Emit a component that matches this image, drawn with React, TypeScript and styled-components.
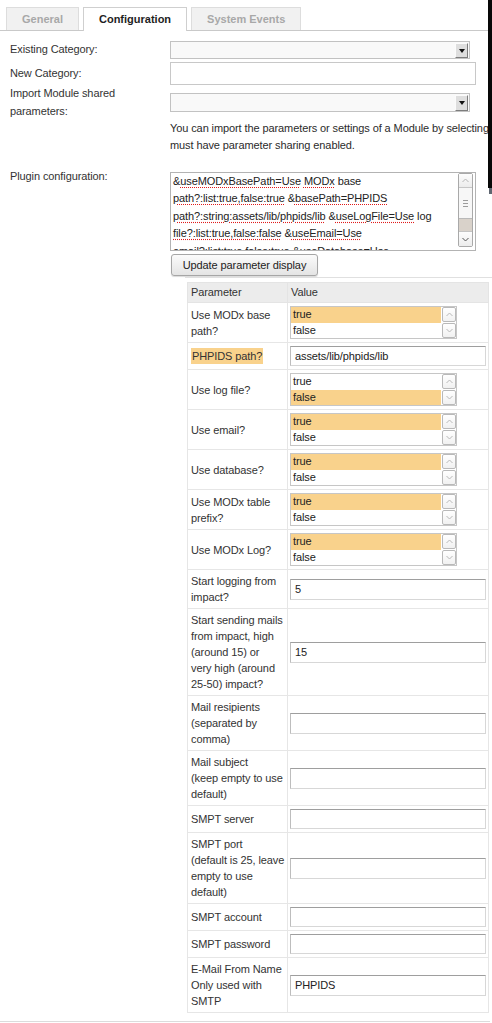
import React from "react";
import styled, { createGlobalStyle } from "styled-components";

interface Param {
  label: string[];
  kind: "list" | "text";
  value?: string;
  selected?: "true" | "false";
  marked?: boolean;
}

const params: Param[] = [
  { label: ["Use MODx base", "path?"], kind: "list", selected: "true" },
  { label: ["PHPIDS path?"], kind: "text", value: "assets/lib/phpids/lib", marked: true },
  { label: ["Use log file?"], kind: "list", selected: "false" },
  { label: ["Use email?"], kind: "list", selected: "true" },
  { label: ["Use database?"], kind: "list", selected: "true" },
  { label: ["Use MODx table", "prefix?"], kind: "list", selected: "true" },
  { label: ["Use MODx Log?"], kind: "list", selected: "true" },
  { label: ["Start logging from", "impact?"], kind: "text", value: "5" },
  {
    label: ["Start sending mails", "from impact, high", "(around 15) or", "very high (around", "25-50) impact?"],
    kind: "text",
    value: "15",
  },
  { label: ["Mail resipients", "(separated by", "comma)"], kind: "text" },
  { label: ["Mail subject", "(keep empty to use", "default)"], kind: "text" },
  { label: ["SMPT server"], kind: "text" },
  { label: ["SMPT port", "(default is 25, leave", "empty to use", "default)"], kind: "text" },
  { label: ["SMPT account"], kind: "text" },
  { label: ["SMPT password"], kind: "text" },
  { label: ["E-Mail From Name", "Only used with", "SMTP"], kind: "text", value: "PHPIDS" },
];

const Chevron: React.FC<{ up?: boolean; color: string }> = ({ up, color }) => (
  <svg width="7" height="5" viewBox="0 0 7 5">
    <polyline
      points={up ? "0.5,4 3.5,1 6.5,4" : "0.5,1 3.5,4 6.5,1"}
      fill="none"
      stroke={color}
      strokeWidth="1"
    />
  </svg>
);

const ListSelect: React.FC<{ selected: "true" | "false" }> = ({ selected }) => (
  <ListBox>
    <Options>
      <Option $selected={selected === "true"}>true</Option>
      <Option $selected={selected === "false"}>false</Option>
    </Options>
    <ListScroll>
      <ListBtn>
        <Chevron up color="#b8b8b8" />
      </ListBtn>
      <ListBtn>
        <Chevron color="#b8b8b8" />
      </ListBtn>
    </ListScroll>
  </ListBox>
);

const App: React.FC = () => {
  return (
    <Page>
      <GlobalStyle />
      <TabBar>
        <Tab>General</Tab>
        <Tab $active>Configuration</Tab>
        <Tab>System Events</Tab>
      </TabBar>

      <Form>
        <FormRow $mt={0}>
          <Label>Existing Category:</Label>
          <Select>
            <SelectArrow />
          </Select>
        </FormRow>
        <FormRow $mt={3}>
          <Label>New Category:</Label>
          <TextInput />
        </FormRow>
        <FormRow $mt={0}>
          <Label>
            Import Module shared
            <br />
            parameters:
          </Label>
          <Select $tall>
            <SelectArrow />
          </Select>
        </FormRow>
        <FormRow $mt={0}>
          <span />
          <Help>
            You can import the parameters or settings of a Module by selecting the module name from the above
            drop menu. NOTE: In order to import parameters from a module, the module
            <br />
            must have parameter sharing enabled.
          </Help>
        </FormRow>

        <FormRow $mt={14} $top>
          <Label>Plugin configuration:</Label>
          <div>
            <ConfigBox>
              <ConfigText>
                <div>
                  &amp;<Spell>useMODxBasePath=Use</Spell> <Spell>MODx</Spell> base
                </div>
                <div>
                  <Spell>path?:list:true,false:true</Spell> &amp;<Spell>basePath=PHPIDS</Spell>
                </div>
                <div>
                  <Spell>path?:string:assets/lib/phpids/lib</Spell> &amp;<Spell>useLogFile=Use</Spell> log
                </div>
                <div>
                  <Spell>file?:list:true,false:false</Spell> &amp;<Spell>useEmail=Use</Spell>
                </div>
                <div>
                  <Spell>email?:list:true,false:true</Spell> &amp;<Spell>useDatabase=Use</Spell>
                </div>
              </ConfigText>
              <ConfigScroll>
                <ScrollEnd $h={13}>
                  <Chevron up color="#b4b4b4" />
                </ScrollEnd>
                <Thumb>
                  <Grip />
                  <Grip />
                  <Grip />
                </Thumb>
                <Track />
                <ScrollEnd $h={14}>
                  <Chevron color="#555" />
                </ScrollEnd>
              </ConfigScroll>
            </ConfigBox>
            <Button>Update parameter display</Button>
            <TableWrap>
              <ParamTable>
                <colgroup>
                  <col style={{ width: 100 }} />
                  <col style={{ width: 201 }} />
                </colgroup>
                <thead>
                  <tr>
                    <Th>Parameter</Th>
                    <Th>Value</Th>
                  </tr>
                </thead>
                <tbody>
                  {params.map((p, i) => (
                    <tr key={i}>
                      <NameCell>
                        {p.marked ? (
                          <Mark>{p.label[0]}</Mark>
                        ) : (
                          p.label.map((line, j) => <div key={j}>{line}</div>)
                        )}
                      </NameCell>
                      <ValueCell>
                        {p.kind === "list" ? (
                          <ListSelect selected={p.selected || "true"} />
                        ) : (
                          <ParamInput $tall={p.label.length > 1} defaultValue={p.value || ""} />
                        )}
                      </ValueCell>
                    </tr>
                  ))}
                </tbody>
              </ParamTable>
            </TableWrap>
          </div>
        </FormRow>
      </Form>
      <Divider />
      <EdgeStrip />
    </Page>
  );
};

export default App;

const GlobalStyle = createGlobalStyle`
  html, body {
    margin: 0;
    padding: 0;
    background: #fff;
  }
  body {
    font-family: "Liberation Sans", Arial, sans-serif;
    font-size: 11px;
    letter-spacing: -0.1px;
    color: #333;
    overflow: hidden;
  }
`;

const Page = styled.div`
  position: relative;
  width: 492px;
  height: 1023px;
  overflow: hidden;
`;

const TabBar = styled.div`
  display: flex;
  align-items: flex-end;
  gap: 4px;
  height: 30px;
  padding-left: 6px;
  border-bottom: 1px solid #c9c9c9;
`;

const Tab = styled.div<{ $active?: boolean }>`
  box-sizing: border-box;
  height: ${(p) => (p.$active ? 24 : 23)}px;
  margin-bottom: ${(p) => (p.$active ? -1 : 0)}px;
  padding: 0 15px;
  line-height: 22px;
  letter-spacing: 0;
  border: 1px solid ${(p) => (p.$active ? "#cfcfcf" : "#dddddd")};
  border-bottom: 0;
  background: ${(p) => (p.$active ? "#fff" : "#f1f1f1")};
  color: ${(p) => (p.$active ? "#1e1e1e" : "#a8a8a8")};
  font-weight: bold;
`;

const Form = styled.div`
  padding: 10px 0 0 10px;
`;

const FormRow = styled.div<{ $mt: number; $top?: boolean }>`
  display: grid;
  grid-template-columns: 160px 1fr;
  align-items: ${(p) => (p.$top ? "start" : "center")};
  margin-top: ${(p) => p.$mt}px;
`;

const Label = styled.div`
  line-height: 17.5px;
  color: #333;
`;

const Select = styled.div<{ $tall?: boolean }>`
  box-sizing: border-box;
  display: flex;
  justify-content: flex-end;
  align-items: center;
  width: 300px;
  height: ${(p) => (p.$tall ? 19 : 18)}px;
  border: 1px solid #c2c2c2;
  background: #f9f9f9;
`;

const SelectArrow = styled.div`
  box-sizing: border-box;
  position: relative;
  width: 13px;
  height: calc(100% - 1px);
  margin-right: 1px;
  background: #dedede;
  border: 1px solid;
  border-color: #fbfbfb #7d7d7d #7d7d7d #fbfbfb;

  &::after {
    content: "";
    position: absolute;
    left: 3px;
    top: 5px;
    border-left: 3px solid transparent;
    border-right: 3px solid transparent;
    border-top: 4px solid #111;
  }
`;

const TextInput = styled.div`
  box-sizing: border-box;
  width: 306px;
  height: 23px;
  border: 1px solid #c8c8c8;
  background: #fff;
`;

const Help = styled.div`
  line-height: 17px;
  white-space: nowrap;
  color: #2b2b2b;
`;

const ConfigBox = styled.div`
  box-sizing: border-box;
  display: flex;
  width: 306px;
  height: 79px;
  margin-top: 4px;
  border: 1px solid #b3b3b3;
  background: #fff;
`;

const ConfigText = styled.div`
  flex: 1;
  overflow: hidden;
  padding: 0 2px;
  line-height: 17.4px;
  white-space: nowrap;
  color: #222;
`;

const Spell = styled.span`
  text-decoration: underline dotted #e01b1b;
  text-underline-offset: 2px;
`;

const ConfigScroll = styled.div`
  box-sizing: border-box;
  display: flex;
  flex-direction: column;
  width: 15px;
  margin: 0 2px 3px 0;
  border: 1px solid #a9a9a9;
  border-radius: 2px;
  background: #f4f4f4;
`;

const ScrollEnd = styled.div<{ $h: number }>`
  display: flex;
  align-items: center;
  justify-content: center;
  height: ${(p) => p.$h}px;
  background: linear-gradient(#fdfdfd, #ececec);
`;

const Thumb = styled.div`
  display: flex;
  flex-direction: column;
  align-items: center;
  justify-content: center;
  gap: 2px;
  height: 30px;
  border-top: 1px solid #c6c6c6;
  border-bottom: 1px solid #b9b9b9;
  background: #f7f7f7;
`;

const Grip = styled.div`
  width: 5px;
  height: 1px;
  background: #9c9c9c;
`;

const Track = styled.div`
  flex: 1;
  background: #d9d2ca;
  border-bottom: 1px solid #c4c4c4;
`;

const Button = styled.div`
  box-sizing: border-box;
  width: 147px;
  height: 22px;
  margin: 3px 0 0 1px;
  line-height: 20px;
  text-align: center;
  border: 1px solid #a6a6a6;
  border-radius: 3px;
  background: linear-gradient(#fbfbfb, #e4e4e4);
  color: #222;
  box-shadow: 0 1px 1px rgba(0, 0, 0, 0.15);
`;

const TableWrap = styled.div`
  width: 305px;
  margin: 1px 0 0 15px;
  padding: 4px 0 0 2px;
  border-top: 1px solid #e0e0e0;
`;

const ParamTable = styled.table`
  width: 301px;
  table-layout: fixed;
  border-collapse: collapse;
  border: 1px solid #e4e4e4;
`;

const Th = styled.th`
  padding: 1px 3px;
  line-height: 17px;
  text-align: left;
  font-weight: normal;
  color: #333;
  background: #ececec;
  border: 1px solid #e4e4e4;
`;

const NameCell = styled.td`
  padding: 3px 0 3px 3px;
  line-height: 16px;
  white-space: nowrap;
  vertical-align: middle;
  color: #333;
  border: 1px solid #e6e6e6;
`;

const ValueCell = styled.td`
  padding: 3px 3px 3px 2px;
  vertical-align: middle;
  border: 1px solid #e6e6e6;
`;

const Mark = styled.span`
  display: inline-block;
  padding: 0 1px;
  line-height: 16px;
  background: #f9d28c;
`;

const ParamInput = styled.input<{ $tall?: boolean }>`
  box-sizing: border-box;
  display: block;
  width: 196px;
  height: ${(p) => (p.$tall ? 21 : 20)}px;
  margin: 0;
  padding: 0 4px;
  font: inherit;
  letter-spacing: inherit;
  color: #222;
  background: #fff;
  border: 1px solid;
  border-color: #9e9e9e #d7d7d7 #d7d7d7 #bdbdbd;
  outline: none;
`;

const ListBox = styled.div`
  box-sizing: border-box;
  display: flex;
  width: 167px;
  height: 33px;
  border: 1px solid #c6c6c6;
  background: #fff;
`;

const Options = styled.div`
  flex: 1;
  margin-right: 1px;
`;

const Option = styled.div<{ $selected: boolean }>`
  height: 15.5px;
  line-height: 15px;
  padding-left: 2px;
  color: #222;
  background: ${(p) => (p.$selected ? "#f9d28c" : "transparent")};
`;

const ListScroll = styled.div`
  display: flex;
  flex-direction: column;
  gap: 1px;
  width: 14px;
`;

const ListBtn = styled.div`
  box-sizing: border-box;
  display: flex;
  align-items: center;
  justify-content: center;
  height: 15px;
  border: 1px solid #b9b9b9;
  border-radius: 2px;
  background: linear-gradient(#ffffff, #f1f1f1);
`;

const Divider = styled.div`
  margin-top: 8px;
  width: 490px;
  border-top: 1px solid #dcdcdc;
`;

const EdgeStrip = styled.div`
  position: absolute;
  top: 0;
  right: 0;
  width: 4px;
  height: 188px;
  background: #080808;

  &::after {
    content: "";
    position: absolute;
    top: 188px;
    left: 1px;
    width: 3px;
    height: 6px;
    background: #5f6670;
  }
`;
